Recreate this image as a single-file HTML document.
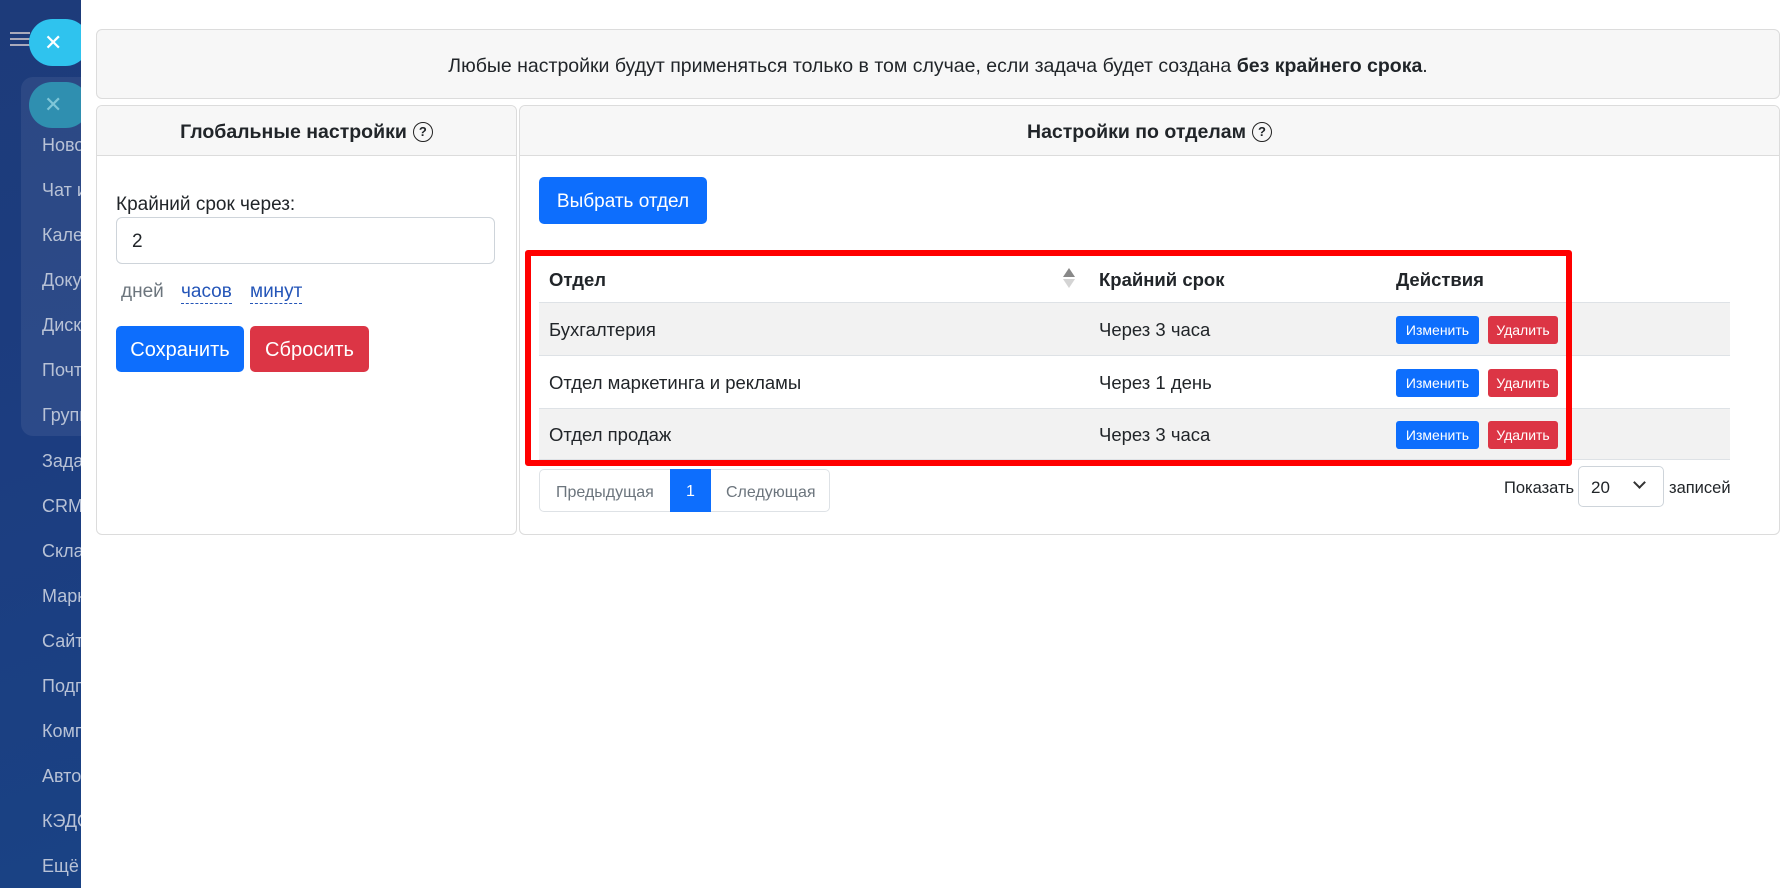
<!DOCTYPE html>
<html><head><meta charset="utf-8"><style>
*{box-sizing:border-box;margin:0;padding:0}
body{width:1791px;height:888px;overflow:hidden;font-family:"Liberation Sans",sans-serif;color:#212529;background:#fff;position:relative}
.abs{position:absolute}
.side{left:0;top:0;width:81px;height:888px;background:linear-gradient(160deg,#1d3b7a 0%,#1c3d80 50%,#1a4284 100%)}
.side .it{position:absolute;left:42px;color:#b8c2d6;font-size:18px;white-space:nowrap}
.modal{left:81px;top:0;width:1710px;height:888px;background:#fff}
.box{border:1px solid #dcdcdc;border-radius:6px;background:#fff}
.hdr{background:#f7f7f7;border-bottom:1px solid #dcdcdc;height:50px;display:flex;align-items:center;justify-content:center;font-weight:bold;font-size:19.5px;border-radius:6px 6px 0 0;padding-top:3px}
.q{display:inline-block;width:20px;height:20px;border:1.6px solid #222;border-radius:50%;font-size:13px;line-height:17px;text-align:center;margin-left:6px;font-weight:bold}
.btn{position:absolute;color:#fff;border-radius:5px;display:flex;align-items:center;justify-content:center;font-size:19px;padding-top:3px}
.blue{background:#0d6efd}.red{background:#dc3545}
.row{position:absolute;left:539px;width:1191px;border-top:1px solid #dee2e6;font-size:18.5px}
.row span{position:absolute;top:52%;transform:translateY(-50%)}
.sb{position:absolute;height:28px;top:52%;transform:translateY(-50%);color:#fff;font-size:14px;border-radius:3px;display:flex;align-items:center;justify-content:center}
</style></head><body>
<div class="abs side">
  <div class="abs" style="left:10px;top:32px;width:20px;height:2px;background:#aab;box-shadow:0 6px 0 #aab,0 12px 0 #aab"></div>
  <div class="abs" style="left:21px;top:77px;width:60px;height:359px;background:rgba(255,255,255,0.07);border-radius:12px 0 0 12px"></div>
  <div class="abs" style="left:29px;top:82px;width:60px;height:46px;background:#2f8fb0;border-radius:23px;color:#7fc6d8;font-size:22px;padding-left:15px;line-height:46px">✕</div>
  <div class="abs" style="left:29px;top:19px;width:60px;height:47px;background:#2fc3ee;border-radius:24px;color:#fff;font-size:22px;padding-left:15px;line-height:47px">✕</div>
  <div class="it" style="top:135px">Новости</div>
  <div class="it" style="top:180px">Чат и звонки</div>
  <div class="it" style="top:225px">Календарь</div>
  <div class="it" style="top:270px">Документы</div>
  <div class="it" style="top:315px">Диск</div>
  <div class="it" style="top:360px">Почта</div>
  <div class="it" style="top:405px">Группы</div>
  <div class="it" style="top:451px">Задачи</div>
  <div class="it" style="top:496px">CRM</div>
  <div class="it" style="top:541px">Склад</div>
  <div class="it" style="top:586px">Маркетинг</div>
  <div class="it" style="top:631px">Сайты</div>
  <div class="it" style="top:676px">Подписка</div>
  <div class="it" style="top:721px">Компания</div>
  <div class="it" style="top:766px">Автоматизация</div>
  <div class="it" style="top:811px">КЭДО</div>
  <div class="it" style="top:856px">Ещё</div>
</div>
<div class="abs modal"></div>

<div class="abs box" style="left:96px;top:29px;width:1684px;height:70px;background:#f7f7f7;display:flex;align-items:center;justify-content:center;font-size:19.5px;padding-top:4px">Любые настройки будут применяться только в том случае, если задача будет создана&nbsp;<b>без крайнего срока</b>.</div>

<div class="abs box" style="left:96px;top:105px;width:421px;height:430px">
  <div class="hdr">Глобальные настройки<span class="q">?</span></div>
</div>
<div class="abs" style="left:116px;top:194px;font-size:19px">Крайний срок через:</div>
<div class="abs" style="left:116px;top:217px;width:379px;height:47px;border:1px solid #ced4da;border-radius:6px;font-size:19px;padding:13px 15px">2</div>
<div class="abs" style="left:121px;top:281px;font-size:19px;color:#6c757d">дней</div>
<div class="abs" style="left:181px;top:281px;font-size:19px;color:#2455b8;border-bottom:1px dashed #2455b8;line-height:22px">часов</div>
<div class="abs" style="left:250px;top:281px;font-size:19px;color:#2455b8;border-bottom:1px dashed #2455b8;line-height:22px">минут</div>
<div class="btn blue" style="left:116px;top:326px;width:128px;height:46px;font-size:20px">Сохранить</div>
<div class="btn red" style="left:250px;top:326px;width:119px;height:46px;font-size:20px">Сбросить</div>

<div class="abs box" style="left:519px;top:105px;width:1261px;height:430px">
  <div class="hdr">Настройки по отделам<span class="q">?</span></div>
</div>
<div class="btn blue" style="left:539px;top:177px;width:168px;height:47px">Выбрать отдел</div>

<div class="row" style="top:256px;height:47px;border-top:none;font-weight:bold">
  <span style="left:10px">Отдел</span>
  <span style="left:524px;top:12px;transform:none;width:0;height:0;border-left:6px solid transparent;border-right:6px solid transparent;border-bottom:9px solid #888"></span>
  <span style="left:524px;top:23px;transform:none;width:0;height:0;border-left:6px solid transparent;border-right:6px solid transparent;border-top:9px solid #d4d4d4"></span>
  <span style="left:560px">Крайний срок</span>
  <span style="left:857px">Действия</span>
</div>
<div class="row" style="top:302px;height:53px;background:#f2f2f2">
  <span style="left:10px">Бухгалтерия</span><span style="left:560px">Через 3 часа</span>
  <div class="sb blue" style="left:857px;width:83px">Изменить</div><div class="sb red" style="left:949px;width:70px">Удалить</div>
</div>
<div class="row" style="top:355px;height:53px">
  <span style="left:10px">Отдел маркетинга и рекламы</span><span style="left:560px">Через 1 день</span>
  <div class="sb blue" style="left:857px;width:83px">Изменить</div><div class="sb red" style="left:949px;width:70px">Удалить</div>
</div>
<div class="row" style="top:408px;height:52px;background:#f2f2f2;border-bottom:1px solid #dee2e6">
  <span style="left:10px">Отдел продаж</span><span style="left:560px">Через 3 часа</span>
  <div class="sb blue" style="left:857px;width:83px">Изменить</div><div class="sb red" style="left:949px;width:70px">Удалить</div>
</div>
<div class="abs" style="left:525px;top:250px;width:1047px;height:216px;border:6px solid #f00;border-radius:3px"></div>

<div class="abs" style="left:539px;top:469px;width:291px;height:43px;border:1px solid #dee2e6;border-radius:5px;font-size:16px;color:#6c757d">
  <span class="abs" style="left:16px;top:14px">Предыдущая</span>
  <span class="abs" style="left:130px;top:-1px;width:41px;height:43px;background:#0d6efd;color:#fff;text-align:center;line-height:45px">1</span>
  <span class="abs" style="left:186px;top:14px">Следующая</span>
</div>
<div class="abs" style="left:1504px;top:479px;font-size:16.5px">Показать</div>
<div class="abs" style="left:1578px;top:466px;width:86px;height:41px;border:1px solid #ced4da;border-radius:5px;font-size:17px;padding:11px 12px">20<span class="abs" style="left:56px;top:11px;width:9px;height:9px;border-right:2px solid #333;border-bottom:2px solid #333;transform:rotate(45deg)"></span></div>
<div class="abs" style="left:1669px;top:479px;font-size:16.5px">записей</div>
</body></html>
